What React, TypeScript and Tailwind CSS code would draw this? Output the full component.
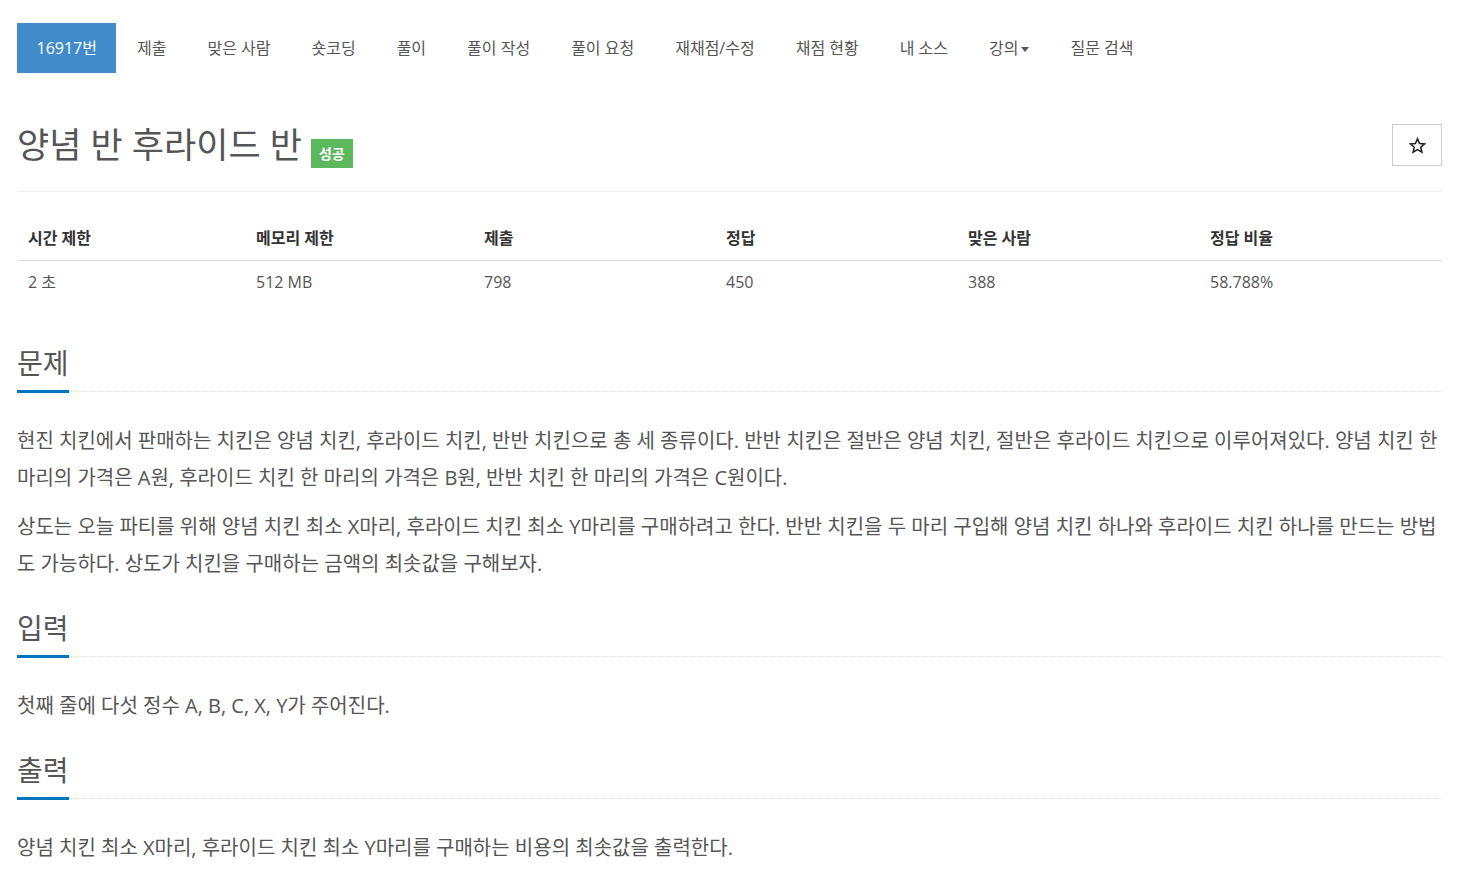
import type { FC } from "react";

const navItems = ["제출", "맞은 사람", "숏코딩", "풀이", "풀이 작성", "풀이 요청", "재채점/수정", "채점 현황", "내 소스", "강의", "질문 검색"];

const stats = [
  ["시간 제한", "2 초"],
  ["메모리 제한", "512 MB"],
  ["제출", "798"],
  ["정답", "450"],
  ["맞은 사람", "388"],
  ["정답 비율", "58.788%"],
];

const StarIcon: FC = () => (
  <svg width="17" height="17" viewBox="0 0 24 24" fill="none" stroke="#222" strokeWidth="2.2" strokeLinejoin="miter">
    <path d="M12 2.5l2.9 6.6 7.1.6-5.4 4.7 1.6 7-6.2-3.7-6.2 3.7 1.6-7L2 9.7l7.1-.6z" />
  </svg>
);

const Headline: FC<{ title: string }> = ({ title }) => (
  <h2 className="mt-[18px] border-b border-dotted border-[#ddd] text-[28px] font-normal leading-[33px] text-[#555]">
    <span className="mb-[-2px] inline-block border-b-[3px] border-[#0076c0] pb-[10px]">{title}</span>
  </h2>
);

const Para: FC<{ children: React.ReactNode }> = ({ children }) => (
  <p className="mb-[12px] text-[20px] leading-[37px] text-[#555]">{children}</p>
);

export default function App() {
  return (
    <div
      className="flex min-h-screen flex-col bg-white pb-6 pl-[17px] pr-[30px] pt-[23px]"
      style={{ fontFamily: "'Open Sans', 'Noto Sans CJK KR', sans-serif" }}
    >
      <ul className="flex h-[50px] items-center text-[16px] text-[#555]">
        <li className="flex h-full items-center bg-[#428bca] px-[19.5px] text-white">16917번</li>
        {navItems.map((item) => (
          <li key={item} className="flex h-full items-center px-[20.5px]">
            {item}
            {item === "강의" && (
              <span className="ml-[3px] mt-[2px] inline-block border-x-[4px] border-t-[5px] border-x-transparent border-t-[#555]" />
            )}
          </li>
        ))}
      </ul>

      <div className="mt-[51px] flex items-center justify-between border-b border-[#eee] pb-[25px]">
        <div className="flex items-center">
          <h1 className="text-[35px] font-normal leading-[42px] text-[#555]">양념 반 후라이드 반</h1>
          <span className="-mb-[8px] ml-[9px] mt-[8px] flex h-[29px] items-center bg-[#5cb85c] px-[8px] text-[14px] font-bold text-white">
            성공
          </span>
        </div>
        <button className="flex h-[42px] w-[50px] items-center justify-center border border-[#ccc] bg-white">
          <StarIcon />
        </button>
      </div>

      <div className="mb-[26px] mt-[23px] grid grid-cols-[228px_228px_242px_242px_242px_1fr] text-[16px]">
        {stats.map(([h]) => (
          <div key={h} className="flex h-[46px] items-center border-b border-[#ddd] px-[11px] font-bold text-[#333]">
            {h}
          </div>
        ))}
        {stats.map(([h, v]) => (
          <div key={h} className="flex h-[42px] items-center px-[11px] text-[#555]">
            {v}
          </div>
        ))}
      </div>

      <Headline title="문제" />
      <div className="mt-[30px]">
        <Para>
          현진 치킨에서 판매하는 치킨은 양념 치킨, 후라이드 치킨, 반반 치킨으로 총 세 종류이다. 반반 치킨은 절반은 양념 치킨, 절반은 후라이드 치킨으로 이루어져있다. 양념 치킨 한 마리의 가격은 A원, 후라이드 치킨 한 마리의 가격은 B원, 반반 치킨 한 마리의 가격은 C원이다.
        </Para>
        <Para>
          상도는 오늘 파티를 위해 양념 치킨 최소 X마리, 후라이드 치킨 최소 Y마리를 구매하려고 한다. 반반 치킨을 두 마리 구입해 양념 치킨 하나와 후라이드 치킨 하나를 만드는 방법도 가능하다. 상도가 치킨을 구매하는 금액의 최솟값을 구해보자.
        </Para>
      </div>

      <Headline title="입력" />
      <div className="mt-[30px]">
        <Para>첫째 줄에 다섯 정수 A, B, C, X, Y가 주어진다.</Para>
      </div>

      <Headline title="출력" />
      <div className="mt-[30px]">
        <Para>양념 치킨 최소 X마리, 후라이드 치킨 최소 Y마리를 구매하는 비용의 최솟값을 출력한다.</Para>
      </div>
    </div>
  );
}
